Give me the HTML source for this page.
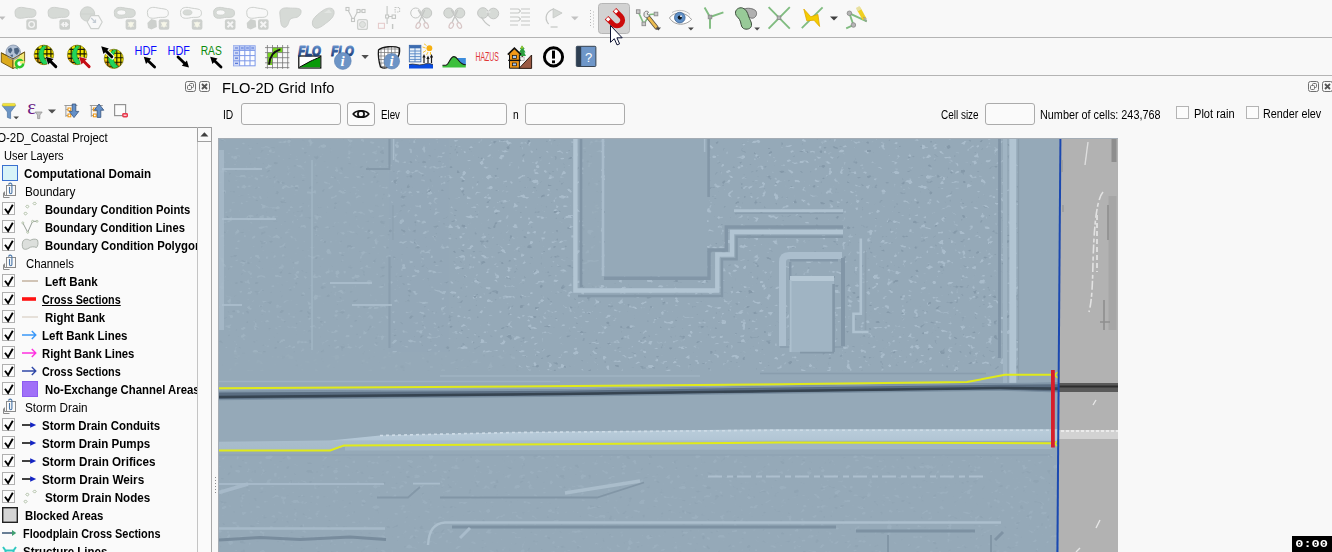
<!DOCTYPE html>
<html><head><meta charset="utf-8"><title>QGIS FLO-2D</title>
<style>
html,body{margin:0;padding:0;}
body{width:1332px;height:552px;overflow:hidden;background:#f8f8f8;position:relative;font-family:"Liberation Sans","DejaVu Sans",sans-serif;font-size:12px;color:#000;}
.abs{position:absolute;}
.hl{position:absolute;left:0;width:1332px;height:1px;background:#b4b4b4;}
.t{position:absolute;white-space:nowrap;line-height:18px;height:18px;font-size:12px;transform-origin:0 50%;}
.b{font-weight:bold;}
.inp{position:absolute;border:1px solid #ababab;border-radius:3px;background:#fafafa;box-sizing:border-box;}
.cb{position:absolute;width:13px;height:13px;border:1px solid #b4b4b4;background:#fcfcfc;box-sizing:border-box;}
#tree{position:absolute;left:0;top:127px;width:198px;height:425px;overflow:hidden;border-top:1px solid #9a9a9a;box-sizing:border-box;background:#fafafa;}
#sb{position:absolute;left:197px;top:127px;width:15px;height:425px;box-sizing:border-box;border-left:1px solid #c4c4c4;border-right:1px solid #a8a8a8;border-top:1px solid #9a9a9a;background:#fafafa;}
#sbb{position:absolute;left:-1px;top:0;width:15px;height:14px;box-sizing:border-box;border-left:1px solid #a0a0a0;border-right:1px solid #a0a0a0;border-bottom:1px solid #a0a0a0;}
#map{position:absolute;left:218px;top:138px;width:900px;height:414px;overflow:hidden;border-top:1px solid #a4acb4;border-left:1px solid #a4acb4;box-sizing:border-box;}
.ck{position:absolute;left:2px;width:13px;height:13px;border:1px solid #b0b0b0;background:#fcfcfc;box-sizing:border-box;}
</style></head><body>
<div class="hl" style="top:37px"></div>
<div class="hl" style="top:75px"></div>
<svg class="abs" style="left:0;top:0" width="1332" height="76" viewBox="0 0 1332 76">
<path d="M-1 16.5 H5.5 L2.2 20 Z" fill="#bdbdbd"/>
<path d="M15.0 12.5 C15.0 8 19.0 7 23.0 7.5 C27.0 8.5 31.0 8.5 34.0 9.5 C36.5 10.5 36.5 15 34.5 16.5 C32.0 18 29.0 17 26.0 17.5 C22.0 18.5 17.0 19 15.5 16 Z" fill="#d6dad6" stroke="#cdd0cd" stroke-width="1"/><rect x="26.3" y="19.2" width="10.6" height="10.6" rx="2" fill="#cdd0cd"/><circle cx="31.6" cy="24.5" r="2.8" fill="none" stroke="#f4f4f4" stroke-width="1.3"/>
<path d="M48.1 12.5 C48.1 8 52.1 7 56.1 7.5 C60.1 8.5 64.1 8.5 67.1 9.5 C69.6 10.5 69.6 15 67.6 16.5 C65.1 18 62.1 17 59.1 17.5 C55.1 18.5 50.1 19 48.6 16 Z" fill="#d6dad6" stroke="#cdd0cd" stroke-width="1"/><rect x="59.400000000000006" y="19.2" width="10.6" height="10.6" rx="2" fill="#cdd0cd"/><path d="M61.2 24.5 L63.7 22.0 V27.0 Z M68.2 24.5 L65.7 22.0 V27.0 Z M63.7 24.5 H65.7" fill="#f4f4f4" stroke="#f4f4f4" stroke-width="1"/>
<circle cx="87.5" cy="14" r="7.2" fill="#d6dad6" stroke="#cdd0cd"/><path d="M80.4 14 H94.7" stroke="#cdd0cd" stroke-width="0.8"/><path d="M87.2 22 L91.0 15.6 H98.5 L102.2 22 L98.5 28.6 H91.0 Z" fill="#f8f8f8" stroke="#cdd0cd" stroke-width="1.1"/><path d="M91.2 18 L95.2 22 M95.5 19.5 V22.3 H92.7" stroke="#c4ccd4" stroke-width="1.2" fill="none"/>
<path d="M114.30000000000001 12.5 C114.30000000000001 8 118.30000000000001 7 122.30000000000001 7.5 C126.30000000000001 8.5 130.3 8.5 133.3 9.5 C135.8 10.5 135.8 15 133.8 16.5 C131.3 18 128.3 17 125.30000000000001 17.5 C121.30000000000001 18.5 116.30000000000001 19 114.80000000000001 16 Z" fill="#d6dad6" stroke="#cdd0cd" stroke-width="1"/><ellipse cx="121.30000000000001" cy="12.5" rx="4.5" ry="2.6" fill="#f8f8f8" stroke="#cdd0cd" stroke-width="0.8"/><rect x="125.60000000000001" y="19.2" width="10.6" height="10.6" rx="2" fill="#cdd0cd"/><path d="M127.5 22.3 H134.3 L130.9 27.9 Z" fill="#f6f6e8"/><path d="M127.5 26.7 H134.3 L130.9 21.1 Z" fill="#f6f6e8" opacity="0.7"/>
<path d="M147.4 12.5 C147.4 8 151.4 7 155.4 7.5 C159.4 8.5 163.4 8.5 166.4 9.5 C168.9 10.5 168.9 15 166.9 16.5 C164.4 18 161.4 17 158.4 17.5 C154.4 18.5 149.4 19 147.9 16 Z" fill="#f8f8f8" stroke="#cdd0cd" stroke-width="1"/><path d="M147.4 23 L151.4 19 L156.4 20.5 L156.9 27 L151.4 29.5 L147.9 28 Z" fill="#cdd0cd"/><rect x="158.70000000000002" y="19.2" width="10.6" height="10.6" rx="2" fill="#cdd0cd"/><path d="M160.6 22.3 H167.4 L164.0 27.9 Z" fill="#f6f6e8"/><path d="M160.6 26.7 H167.4 L164.0 21.1 Z" fill="#f6f6e8" opacity="0.7"/>
<path d="M180.5 12.5 C180.5 8 184.5 7 188.5 7.5 C192.5 8.5 196.5 8.5 199.5 9.5 C202.0 10.5 202.0 15 200.0 16.5 C197.5 18 194.5 17 191.5 17.5 C187.5 18.5 182.5 19 181.0 16 Z" fill="#f8f8f8" stroke="#cdd0cd" stroke-width="1"/><ellipse cx="187.5" cy="12.5" rx="4.5" ry="2.6" fill="#d6dad6" stroke="#cdd0cd" stroke-width="0.8"/><rect x="191.8" y="19.2" width="10.6" height="10.6" rx="2" fill="#cdd0cd"/><path d="M193.7 22.3 H200.5 L197.1 27.9 Z" fill="#f6f6e8"/><path d="M193.7 26.7 H200.5 L197.1 21.1 Z" fill="#f6f6e8" opacity="0.7"/>
<path d="M213.60000000000002 12.5 C213.60000000000002 8 217.60000000000002 7 221.60000000000002 7.5 C225.60000000000002 8.5 229.60000000000002 8.5 232.60000000000002 9.5 C235.10000000000002 10.5 235.10000000000002 15 233.10000000000002 16.5 C230.60000000000002 18 227.60000000000002 17 224.60000000000002 17.5 C220.60000000000002 18.5 215.60000000000002 19 214.10000000000002 16 Z" fill="#d6dad6" stroke="#cdd0cd" stroke-width="1"/><ellipse cx="220.60000000000002" cy="12.5" rx="4.5" ry="2.6" fill="#f8f8f8" stroke="#cdd0cd" stroke-width="0.8"/><rect x="224.90000000000003" y="19.2" width="10.6" height="10.6" rx="2" fill="#cdd0cd"/><path d="M227.50000000000003 21.8 L232.9 27.2 M232.9 21.8 L227.50000000000003 27.2" stroke="#f4f4f4" stroke-width="2"/>
<path d="M246.70000000000002 12.5 C246.70000000000002 8 250.70000000000002 7 254.70000000000002 7.5 C258.70000000000005 8.5 262.70000000000005 8.5 265.70000000000005 9.5 C268.20000000000005 10.5 268.20000000000005 15 266.20000000000005 16.5 C263.70000000000005 18 260.70000000000005 17 257.70000000000005 17.5 C253.70000000000002 18.5 248.70000000000002 19 247.20000000000002 16 Z" fill="#f8f8f8" stroke="#cdd0cd" stroke-width="1"/><path d="M246.70000000000002 23 L250.70000000000002 19 L255.70000000000002 20.5 L256.20000000000005 27 L250.70000000000002 29.5 L247.20000000000002 28 Z" fill="#cdd0cd"/><rect x="258.0" y="19.2" width="10.6" height="10.6" rx="2" fill="#cdd0cd"/><path d="M260.6 21.8 L266.0 27.2 M266.0 21.8 L260.6 27.2" stroke="#f4f4f4" stroke-width="2"/>
<path d="M279.8 13 C279.8 8.5 283.8 7.5 288.8 8 C293.8 8.5 298.8 7.5 300.8 10 C301.8 13 299.8 17 295.8 17.5 C291.8 18 289.8 18.5 288.8 22 C287.8 26 285.8 28 283.3 27 C280.8 26 280.8 22 280.3 18 Z" fill="#d6dad6" stroke="#cdd0cd"/>
<path d="M312.40000000000003 22 C312.90000000000003 18 317.90000000000003 14 322.90000000000003 10.5 C326.90000000000003 7.5 332.90000000000003 7 333.90000000000003 11 C334.90000000000003 15 331.90000000000003 19 326.90000000000003 22.5 C322.90000000000003 25.5 318.90000000000003 29 315.40000000000003 28 C312.90000000000003 27 312.20000000000005 25 312.40000000000003 22 Z" fill="#d6dad6" stroke="#cdd0cd"/><path d="M323.90000000000003 13 L328.90000000000003 9.5 L331.90000000000003 13 Z" fill="#e2e5e2"/>
<g fill="none" stroke="#c4c6c4" stroke-width="1.1"><path d="M347.5 9 L353.0 20 L358.0 11 H363.0"/><rect x="346.0" y="7.5" width="3" height="3" fill="#f8f8f8"/><rect x="351.5" y="18.5" width="3" height="3" fill="#f8f8f8"/><rect x="357.0" y="9.5" width="3" height="3" fill="#f8f8f8"/><rect x="362.0" y="9.5" width="3" height="3" fill="#f8f8f8"/></g><rect x="357.6" y="19.6" width="9.8" height="9.8" rx="2" fill="#f2f2f2" stroke="#cdd0cd" stroke-width="1.3"/><circle cx="362.5" cy="24.5" r="3" fill="#dfe2df" stroke="#cdd0cd" stroke-width="1"/>
<g fill="none" stroke="#c4c6c4" stroke-width="1.1"><path d="M387.1 6 V24 M387.1 16.5 H393.6"/><rect x="385.6" y="15" width="3" height="3" fill="#f8f8f8"/><rect x="392.1" y="15" width="3.4" height="3.4" fill="#f8f8f8"/><rect x="395.1" y="7.5" width="4.5" height="4.5" stroke-dasharray="1.5 1"/></g><rect x="378.40000000000003" y="23.3" width="6" height="5" fill="none" stroke="#e4c8c8" stroke-width="1"/><path d="M392.6 24 V29" stroke="#c4c6c4" stroke-width="1.4"/>
<circle cx="415.70000000000005" cy="13" r="5" fill="#f8f8f8" stroke="#c4c6c4"/><circle cx="426.70000000000005" cy="13" r="5" fill="#d6dad6" stroke="#c4c6c4"/><path d="M418.20000000000005 10 L425.70000000000005 23 M424.70000000000005 10 L418.70000000000005 23" stroke="#c4c6c4" stroke-width="1.4"/><ellipse cx="418.20000000000005" cy="25.5" rx="2" ry="3" transform="rotate(25 418.20000000000005 25.5)" fill="none" stroke="#d8c6c6" stroke-width="1.2"/><ellipse cx="426.20000000000005" cy="25.5" rx="2" ry="3" transform="rotate(-25 426.20000000000005 25.5)" fill="none" stroke="#d8c6c6" stroke-width="1.2"/>
<circle cx="448.8" cy="13" r="5" fill="#d6dad6" stroke="#c4c6c4"/><circle cx="459.8" cy="13" r="5" fill="#d6dad6" stroke="#c4c6c4"/><path d="M451.3 10 L458.8 23 M457.8 10 L451.8 23" stroke="#c4c6c4" stroke-width="1.4"/><ellipse cx="451.3" cy="25.5" rx="2" ry="3" transform="rotate(25 451.3 25.5)" fill="none" stroke="#d8c6c6" stroke-width="1.2"/><ellipse cx="459.3" cy="25.5" rx="2" ry="3" transform="rotate(-25 459.3 25.5)" fill="none" stroke="#d8c6c6" stroke-width="1.2"/>
<circle cx="482.90000000000003" cy="13" r="5.3" fill="#d6dad6" stroke="#c4c6c4"/><circle cx="493.40000000000003" cy="13.5" r="5.3" fill="#d6dad6" stroke="#c4c6c4"/><path d="M481.40000000000003 17 C483.40000000000003 21 486.40000000000003 24 489.90000000000003 26" stroke="#c4c6c4" stroke-width="1.2" fill="none"/><path d="M486.40000000000003 12 H490.40000000000003" stroke="#eee" stroke-width="1"/>
<path d="M510.0 9 H518.0 M521.0 9 H530.0 M510.0 13 H518.0 M521.0 13 H530.0 M510.0 17 H518.0 M521.0 17 H530.0 M510.0 21 H518.0 M521.0 21 H530.0 M510.0 25 H518.0 M521.0 25 H530.0 M518.0 9 C520.0 9 519.0 11 521.0 11 M518.0 13 C520.0 13 519.0 11 521.0 11 M518.0 17 C520.0 17 519.0 19 521.0 19 M518.0 21 C520.0 21 519.0 19 521.0 19" fill="none" stroke="#c4c6c4" stroke-width="1.1"/>
<path d="M553.6 9 C546.6 11 543.6 18 548.6 24" fill="none" stroke="#c4c6c4" stroke-width="1.2"/><path d="M550.6 27 H557.6" stroke="#c4c6c4" stroke-width="1.2"/><path d="M553.1 8.5 L562.1 13 L553.1 18 Z" fill="#d6dad6" stroke="#c4c6c4" stroke-width="0.8"/>
<path d="M571 16.5 H578.6 L574.8 20.3 Z" fill="#c2c2c2"/>
<rect x="590" y="10" width="1" height="1" fill="#b8b8b8"/><rect x="593" y="11.5" width="1" height="1" fill="#b8b8b8"/>
<rect x="590" y="13" width="1" height="1" fill="#b8b8b8"/><rect x="593" y="14.5" width="1" height="1" fill="#b8b8b8"/>
<rect x="590" y="16" width="1" height="1" fill="#b8b8b8"/><rect x="593" y="17.5" width="1" height="1" fill="#b8b8b8"/>
<rect x="590" y="19" width="1" height="1" fill="#b8b8b8"/><rect x="593" y="20.5" width="1" height="1" fill="#b8b8b8"/>
<rect x="590" y="22" width="1" height="1" fill="#b8b8b8"/><rect x="593" y="23.5" width="1" height="1" fill="#b8b8b8"/>
<rect x="590" y="25" width="1" height="1" fill="#b8b8b8"/><rect x="593" y="26.5" width="1" height="1" fill="#b8b8b8"/>
<rect x="598.5" y="3.5" width="31" height="30" rx="3" fill="#d2d2d2" stroke="#b6b6b6"/>
<g transform="translate(617 20.2) rotate(-45)"><path d="M-5.6 -9.2 V0 A5.6 5.6 0 0 0 5.6 0 V-9.2" fill="none" stroke="#cc0a0a" stroke-width="5"/><path d="M-5.6 -8.6 V-5.4 M5.6 -8.6 V-5.4" stroke="#fff" stroke-width="3.2"/></g>
<g fill="none" stroke="#80bc80" stroke-width="1.6"><path d="M638.2 11.6 L643.8 23.9 L650 14.5 L656 14"/></g>
<rect x="636.4000000000001" y="9.799999999999999" width="3.6" height="3.6" fill="#c8c8c8" stroke="#8c8c8c" stroke-width="0.9"/>
<rect x="642.0" y="22.099999999999998" width="3.6" height="3.6" fill="#c8c8c8" stroke="#8c8c8c" stroke-width="0.9"/>
<rect x="654.2" y="12.2" width="3.6" height="3.6" fill="#c8c8c8" stroke="#8c8c8c" stroke-width="0.9"/>
<path d="M648.5 17.5 L656.5 27.5" stroke="#5a5040" stroke-width="4.4" stroke-linecap="round"/><path d="M648.8 17.9 L656.2 27.1" stroke="#ecbc50" stroke-width="2.6" stroke-linecap="round"/>
<path d="M644 14 C644 11 647 10.5 648.5 12 L647 14 L649.5 15.5 C648.5 18 645 18 644 16 Z" fill="#e8e8e8" stroke="#707070" stroke-width="0.9"/>
<path d="M655.8 27.6 H661 L658.4 30.4 Z" fill="#484848"/>
<path d="M669.5 18 C673 12 685 10.5 691.5 19.5 C686 25.5 675 26.5 669.5 18 Z" fill="#fff" stroke="#909090" stroke-width="0.9"/><path d="M672 12.5 C678 9 686 10 690 14.5" fill="none" stroke="#b0b0b0" stroke-width="0.8"/><circle cx="679.8" cy="17.6" r="5.3" fill="#5f8fc6" stroke="#3c6494" stroke-width="0.8"/><circle cx="679.8" cy="17.6" r="2.1" fill="#101820"/><circle cx="681" cy="16.2" r="0.9" fill="#fff"/>
<path d="M688 27.6 H693.8 L690.9 30.5 Z" fill="#484848"/>
<path d="M710 17 L704.6 7.5 M710 17 L723.4 12.3 M710 17 V28.7" stroke="#80bc80" stroke-width="1.9" fill="none"/><rect x="708.2" y="15.2" width="3.6" height="3.6" fill="#a8a8a8" stroke="#8a8a8a" stroke-width="0.8"/>
<path d="M744 9 C748 7.5 753 8.5 755.5 10.5 C757.5 13 756.5 16 754.5 17.5 C752.5 19 749 18 747.5 16 Z" fill="#b0b0b0" stroke="#666" stroke-width="0.9"/>
<path d="M735.5 13.5 C735 9.5 739 7 742.5 8 C746 9 747.5 12.5 748.5 16 C749.5 19.5 752 22 751.5 25.5 C751 29 746.5 30 743.5 28.5 C740.5 27 741.5 22.5 739.5 19.5 C738 17 736 16.5 735.5 13.5 Z" fill="#98ca98" stroke="#3c4c3c" stroke-width="1"/>
<path d="M754.3 27.6 H760 L757.1 30.5 Z" fill="#484848"/>
<path d="M768.6 7.2 L789.8 28.6 M789.8 7.2 L768.6 28.6" stroke="#80bc80" stroke-width="1.9"/><rect x="777.2" y="16" width="3.6" height="3.6" fill="#b4b4b4" stroke="#8a8a8a" stroke-width="0.8"/>
<path d="M801.8 28.2 L822.6 7.4" stroke="#80bc80" stroke-width="1.9"/>
<path d="M803.8 9 L810.8 16.8 L817.9 14.4 L819.6 26.5 L814 20.2 L806.8 20.8 Z" fill="#f4cc00" stroke="#e0a800" stroke-width="0.8" stroke-linejoin="round"/>
<path d="M830 16.4 H838 L834 20.4 Z" fill="#404040"/>
<path d="M846.2 28.4 L853.4 25 L849.4 13.3 L866.8 21.4" fill="none" stroke="#80bc80" stroke-width="1.9"/><circle cx="849.4" cy="13.3" r="2.3" fill="#b4b4b4" stroke="#888" stroke-width="0.8"/><circle cx="853.4" cy="25" r="2.3" fill="#b4b4b4" stroke="#888" stroke-width="0.8"/>
<path d="M858.6 8.6 L864.4 19" stroke="#f0d020" stroke-width="4.2"/><path d="M863.4 17.2 L866.2 18.4 L866 21.6 Z" fill="#c8c0b0" stroke="#888" stroke-width="0.5"/><path d="M857.6 7 L859.6 10.4" stroke="#e8e0a0" stroke-width="4.2"/>
<path d="M610.5 25.5 V42.3 L614.3 38.7 L617 44.9 L619.6 43.8 L616.9 37.8 H622.2 Z" fill="#fff" stroke="#0a1030" stroke-width="1" stroke-linejoin="miter"/>
<path d="M1.3 52.8 L13 58.8 V68.6 L1.3 62.2 Z" fill="#dcaa1c" stroke="#6a5010" stroke-width="0.9"/>
<path d="M13 58.8 L24.6 52 V62.4 L13 68.6 Z" fill="#f4ea78" stroke="#6a5010" stroke-width="0.9"/>
<circle cx="13.2" cy="52.2" r="7.2" fill="#b4c2d6" stroke="#7888a0" stroke-width="0.7"/>
<path d="M8 49 L11 47.5 L12.5 50 L10.5 53.5 L8.5 52 Z M14 48.5 L18 47.5 L19.5 51 L17 55 L14.5 53 Z M10 55 L13 54.5 L12.5 57.5 Z" fill="#4c6482"/>
<path d="M1.3 52.8 L13 58.8 L24.6 52" fill="none" stroke="#6a5010" stroke-width="0.9"/>
<circle cx="19.6" cy="63.6" r="3.6" fill="#fff" stroke="#2cc42c" stroke-width="2.6"/><path d="M20 61 H24.5 V63.5 H20 Z" fill="#f4ea78"/><path d="M17.5 66.8 L14.8 68 L17.8 69.4 Z" fill="#2cc42c"/>
<clipPath id="gc1"><circle cx="43.9" cy="54.9" r="9.8"/></clipPath><circle cx="43.9" cy="54.9" r="9.8" fill="#f2e400"/><g clip-path="url(#gc1)"><path d="M34.099999999999994 55.9 L41.9 57.9 L42.9 64.7 L34.099999999999994 64.7 Z" fill="#f0a010"/><rect x="44.9" y="58.4" width="4.5" height="4" fill="#f0a010"/><path d="M34.099999999999994 49.4 H53.7 M34.099999999999994 53.9 H53.7 M34.099999999999994 58.4 H53.7 M34.099999999999994 62.4 H53.7 M37.9 45.099999999999994 V64.7 M42.4 45.099999999999994 V64.7 M46.9 45.099999999999994 V64.7 M50.9 45.099999999999994 V64.7 " stroke="#181800" stroke-width="1.1" fill="none"/><path d="M47.9 44.099999999999994 C37.9 46.099999999999994 34.9 58.9 44.9 65.2 L48.4 62.7 C42.4 58.9 41.4 50.9 47.9 44.099999999999994 Z" fill="#22d45a" stroke="#0a9030" stroke-width="0.6"/></g><circle cx="43.9" cy="54.9" r="9.8" fill="none" stroke="#6a6400" stroke-width="0.6"/>
<path d="M50.3 61.2 L55.8 66.6" stroke="#fff" stroke-width="4.6" stroke-linecap="round"/><polygon points="45.3,56.3 47.7,65.3 54.3,58.5" fill="#fff"/>
<path d="M50.1 61.0 L55.8 66.6" stroke="#000" stroke-width="3" stroke-linecap="round"/><polygon points="45.8,56.8 48.1,64.4 53.5,59.0" fill="#000"/>
<clipPath id="gc2"><circle cx="77.2" cy="54.9" r="9.8"/></clipPath><circle cx="77.2" cy="54.9" r="9.8" fill="#f2e400"/><g clip-path="url(#gc2)"><path d="M67.4 55.9 L75.2 57.9 L76.2 64.7 L67.4 64.7 Z" fill="#f0a010"/><rect x="78.2" y="58.4" width="4.5" height="4" fill="#f0a010"/><path d="M67.4 49.4 H87.0 M67.4 53.9 H87.0 M67.4 58.4 H87.0 M67.4 62.4 H87.0 M71.2 45.099999999999994 V64.7 M75.7 45.099999999999994 V64.7 M80.2 45.099999999999994 V64.7 M84.2 45.099999999999994 V64.7 " stroke="#181800" stroke-width="1.1" fill="none"/><path d="M81.2 44.099999999999994 C71.2 46.099999999999994 68.2 58.9 78.2 65.2 L81.7 62.7 C75.7 58.9 74.7 50.9 81.2 44.099999999999994 Z" fill="#22d45a" stroke="#0a9030" stroke-width="0.6"/></g><circle cx="77.2" cy="54.9" r="9.8" fill="none" stroke="#6a6400" stroke-width="0.6"/>
<path d="M83.6 61.2 L89.1 66.6" stroke="#fff" stroke-width="4.6" stroke-linecap="round"/><polygon points="78.6,56.3 81.0,65.3 87.6,58.5" fill="#fff"/>
<path d="M83.4 61.0 L89.1 66.6" stroke="#c40c14" stroke-width="3" stroke-linecap="round"/><polygon points="79.1,56.8 81.4,64.4 86.8,59.0" fill="#c40c14"/>
<clipPath id="gc3"><circle cx="113.8" cy="58.8" r="9.6"/></clipPath><circle cx="113.8" cy="58.8" r="9.6" fill="#f2e400"/><g clip-path="url(#gc3)"><path d="M104.2 59.8 L111.8 61.8 L112.8 68.39999999999999 L104.2 68.39999999999999 Z" fill="#f0a010"/><rect x="114.8" y="62.3" width="4.5" height="4" fill="#f0a010"/><path d="M104.2 53.3 H123.39999999999999 M104.2 57.8 H123.39999999999999 M104.2 62.3 H123.39999999999999 M104.2 66.3 H123.39999999999999 M107.8 49.199999999999996 V68.39999999999999 M112.3 49.199999999999996 V68.39999999999999 M116.8 49.199999999999996 V68.39999999999999 M120.8 49.199999999999996 V68.39999999999999 " stroke="#181800" stroke-width="1.1" fill="none"/><path d="M117.8 48.199999999999996 C107.8 50.199999999999996 104.8 62.8 114.8 68.89999999999999 L118.3 66.39999999999999 C112.3 62.8 111.3 54.8 117.8 48.199999999999996 Z" fill="#22d45a" stroke="#0a9030" stroke-width="0.6"/></g><circle cx="113.8" cy="58.8" r="9.6" fill="none" stroke="#6a6400" stroke-width="0.6"/>
<path d="M105.6 50.7 L112.3 57.2" stroke="#fff" stroke-width="4.6" stroke-linecap="round"/><polygon points="100.6,45.8 103.0,54.8 109.6,48.0" fill="#fff"/>
<path d="M105.5 50.5 L111.8 56.8" stroke="#000" stroke-width="3" stroke-linecap="round"/><polygon points="101.2,46.3 103.5,53.9 108.8,48.5" fill="#000"/>
<text x="134.6" y="54.9" font-family="Liberation Sans, sans-serif" font-size="12.3" fill="#0a0aff" textLength="22.4" lengthAdjust="spacingAndGlyphs">HDF</text>
<path d="M147.8 60.5 L154.6 67.0" stroke="#000" stroke-width="2.8" stroke-linecap="round"/><polygon points="143.8,56.7 146.0,63.9 151.1,58.5" fill="#000"/>
<text x="167.6" y="54.9" font-family="Liberation Sans, sans-serif" font-size="12.3" fill="#0a0aff" textLength="22.4" lengthAdjust="spacingAndGlyphs">HDF</text>
<path d="M185.0 63.8 L178.0 57.0" stroke="#000" stroke-width="2.8" stroke-linecap="round"/><polygon points="189.0,67.6 186.9,60.4 181.8,65.8" fill="#000"/>
<text x="200.7" y="54.9" font-family="Liberation Sans, sans-serif" font-size="12.3" fill="#0a8a0a" textLength="21.1" lengthAdjust="spacingAndGlyphs">RAS</text>
<path d="M214.2 60.5 L221.0 67.0" stroke="#000" stroke-width="2.8" stroke-linecap="round"/><polygon points="210.2,56.7 212.4,63.9 217.5,58.5" fill="#000"/>
<rect x="233.5" y="45.8" width="21.6" height="20" fill="#fdfdff" stroke="#7c98e8"/>
<rect x="233.5" y="45.8" width="21.6" height="4.4" fill="#b8c8f4"/><rect x="233.5" y="45.8" width="6" height="20" fill="#c4d0f4" opacity="0.8"/>
<path d="M233.5 50.4 H255 M233.5 55.6 H255 M233.5 60.8 H255 M239.6 45.8 V65.8 M244.8 45.8 V65.8 M250 45.8 V65.8" stroke="#7c98e8" stroke-width="1"/>
<path d="M235 48 H238 M241 48 H243.6 M246.2 48 H248.8 M251.4 48 H254 M235 53 H238 M235 58.2 H238 M235 63.4 H238" stroke="#5878d8" stroke-width="1.2"/>
<path d="M272.5 47.6 H282.6 V52.6 H277.5 V57.7 H272.5 V65 H267.4 V52.6 H272.5 Z" fill="#76d61e"/><path d="M267.4 45 V68.8 M272.5 45 V68.8 M277.5 45 V68.8 M282.6 45 V68.8 M287.7 45 V68.8 M265 47.6 H289.4 M265 52.6 H289.4 M265 57.7 H289.4 M265 62.8 H289.4 M265 67.6 H289.4 " stroke="#707070" stroke-width="0.9" fill="none" opacity="0.85"/><path d="M269 64.6 C269.6 57 273 51.5 280.4 49.4" fill="none" stroke="#101010" stroke-width="1.8"/>
<defs><linearGradient id="flg" x1="0" y1="0" x2="0" y2="1"><stop offset="0" stop-color="#86b0e2"/><stop offset="0.45" stop-color="#3a64a6"/><stop offset="1" stop-color="#102a5c"/></linearGradient></defs>
<rect x="298.8" y="56" width="22" height="12" fill="#fff" stroke="#000" stroke-width="1.2"/><path d="M299.5 67.2 L310 61.5 C313 60 316 58.8 320.2 57 V67.2 Z" fill="#0a9a0a"/><path d="M299.5 67.2 L310 61.5 C313 60 316 58.8 320.2 57" fill="none" stroke="#000" stroke-width="1"/>
<text x="298.3" y="56" font-family="Liberation Sans, sans-serif" font-weight="bold" font-style="italic" font-size="14" fill="url(#flg)" stroke="url(#flg)" stroke-width="1.1" stroke-linejoin="round" textLength="22.4" lengthAdjust="spacingAndGlyphs">FLO</text>
<text x="331.3" y="56" font-family="Liberation Sans, sans-serif" font-weight="bold" font-style="italic" font-size="14" fill="url(#flg)" stroke="url(#flg)" stroke-width="1.1" stroke-linejoin="round" textLength="22.4" lengthAdjust="spacingAndGlyphs">FLO</text>
<circle cx="342.8" cy="61" r="8.4" fill="#6c94c6" stroke="#5a80b0" stroke-width="0.6"/><text x="342.5" y="66" text-anchor="middle" font-family="Liberation Serif, serif" font-style="italic" font-weight="bold" font-size="15" fill="#fff">i</text>
<path d="M361.4 55 H368.8 L365.1 58.9 Z" fill="#505050"/>
<clipPath id="gb"><path d="M378.5 50 C382 46.5 394 45.5 399.5 48 C400 52 399 56 397 58 L392 66 C388 68 383 68.5 380.5 67 C379 62 378 55 378.5 50 Z"/></clipPath>
<g clip-path="url(#gb)"><rect x="377" y="45" width="24" height="24" fill="#fdfdfd"/><path d="M381 45 V69 M384.5 45 V69 M388 45 V69 M391.5 45 V69 M395 45 V69 M398.5 45 V69 M377 49 H401 M377 52.5 H401 M377 56 H401 M377 59.5 H401 M377 63 H401 M377 66.5 H401 " stroke="#808080" stroke-width="0.8"/></g>
<path d="M378.5 50 C382 46.5 394 45.5 399.5 48 C400 52 399 56 397 58 L392 66 C388 68 383 68.5 380.5 67 C379 62 378 55 378.5 50 Z" fill="none" stroke="#181818" stroke-width="1.3"/>
<circle cx="391.8" cy="61.2" r="7.8" fill="#6c94c6" stroke="#5a80b0" stroke-width="0.6"/><text x="391.5" y="66.2" text-anchor="middle" font-family="Liberation Serif, serif" font-style="italic" font-weight="bold" font-size="15" fill="#fff">i</text>
<rect x="409.3" y="45.3" width="11.6" height="16.6" fill="#eaf2fa" stroke="#2c5a9c" stroke-width="0.8"/><rect x="409.3" y="45.3" width="11.6" height="3" fill="#3c6cb0"/>
<path d="M409.3 51 H421 M409.3 53.8 H421 M409.3 56.6 H421 M409.3 59.4 H421 M415 48 V62" stroke="#5484c4" stroke-width="0.9"/>
<circle cx="429.4" cy="48.2" r="2.9" fill="#f6b010"/><path d="M425.6 48 L422.5 47 M426 50.5 L423 52.5 M428 52 L426.5 55 M430.5 52 V54.8 M426.5 45.5 L424 43.8" stroke="#f6c020" stroke-width="0.9"/>
<path d="M424 63 V56 M428 63 V57.5 M431.5 63 V56" stroke="#181818" stroke-width="1.2"/><path d="M422.4 57.5 L424 54 L425.6 57.5 Z M426.4 59 L428 55.5 L429.6 59 Z M429.9 57.5 L431.5 54 L433.1 57.5 Z" fill="#181818"/>
<path d="M409 64.5 C414 63 418 66 423 64.5 C427 63 430 63.5 433 64.5 V68.6 H409 Z" fill="#0a4ce0"/><path d="M409 64.5 C414 63 418 66 423 64.5 C427 63 430 63.5 433 64.5" fill="none" stroke="#303030" stroke-width="0.8"/>
<path d="M456 58 H465.8 V65 H459.5 Z" fill="#3c8cdc"/>
<path d="M442.5 67.6 V65.2 H446 C449 65 450 56.6 454 56.6 C458 56.6 458.5 64.6 465.8 64.8 V67.6 Z" fill="#3cc03c"/><path d="M442.5 65.2 H446 C449 65 450 56.6 454 56.6 C458 56.6 458.5 64.6 465.8 64.8" fill="none" stroke="#181818" stroke-width="1.1"/>
<text x="475.5" y="61" font-family="Liberation Sans, sans-serif" font-size="12.6" fill="#e03434" textLength="23.3" lengthAdjust="spacingAndGlyphs">HAZUS</text>
<path d="M519 68.4 L531.6 55 V68.4 Z" fill="#9a5a44" stroke="#201008" stroke-width="0.9"/>
<path d="M522 45.5 L519.8 49 L521 49 L519 52.5 L520.5 52.5 L518.6 56 H526 L524.2 52.5 L525.6 52.5 L523.6 49 L524.8 49 Z" fill="#2ca040"/><path d="M522 45.5 L520.5 48.5 L523.6 48.5 Z" fill="#a8c828"/><rect x="521.6" y="56" width="1.4" height="3" fill="#402010"/>
<rect x="520.5" y="57" width="3.6" height="3.6" fill="#f0f0f0" stroke="#888" stroke-width="0.5"/>
<path d="M509.5 53.6 H519.4 V68.2 H509.5 Z" fill="#f49a18" stroke="#101010" stroke-width="1"/>
<path d="M507.8 54.6 L514.4 48.2 L521 54.6" fill="#f49a18" stroke="#101010" stroke-width="1.6" stroke-linejoin="miter"/>
<path d="M508.2 60.4 H520.6" stroke="#101010" stroke-width="1.4"/>
<rect x="512.6" y="55.6" width="3.8" height="2.8" fill="#a8c8f0" stroke="#101010" stroke-width="0.7"/><rect x="512.6" y="63" width="3.8" height="2.8" fill="#a8c8f0" stroke="#101010" stroke-width="0.7"/>
<circle cx="553.5" cy="56.9" r="9.1" fill="#fafafa" stroke="#000" stroke-width="2.9"/><path d="M553.5 50.6 V58.6" stroke="#000" stroke-width="3"/><rect x="552" y="60.4" width="3" height="2.8" fill="#000"/>
<rect x="576.3" y="46.3" width="19.6" height="20.2" rx="1" fill="#6e96c8" stroke="#2a3440" stroke-width="0.9"/><rect x="576.6" y="46.6" width="4.6" height="19.6" fill="#2e3f52"/>
<text x="588.6" y="61.8" text-anchor="middle" font-family="Liberation Sans, sans-serif" font-size="13" fill="#fff">?</text>
</svg>
<svg class="abs" style="left:0;top:100px" width="135" height="24" viewBox="0 100 135 24">
<path d="M2.2 105.6 H15.6 L10.6 112 V118.6 L7.4 117.4 V112 Z" fill="#6c94c4" stroke="#4c74a4" stroke-width="0.7"/><rect x="2.4" y="103.4" width="13" height="2.6" rx="1" fill="#f2e23c" stroke="#c8b820" stroke-width="0.5"/>
<path d="M13.4 116.4 H19 L16.2 119.2 Z" fill="#484848"/>
<text x="27.2" y="113.6" font-family="Liberation Serif, DejaVu Serif, serif" font-size="21" fill="#6c1c84">ε</text>
<path d="M35.2 112 H42.2 L39.8 115 V118.6 H37.6 V115 Z" fill="#c4c4c4" stroke="#8c8c8c" stroke-width="0.7"/>
<path d="M47.9 109.4 H56 L52 113.6 Z" fill="#505050"/>
<path d="M64.4 105.5 H77.4 M65.9 105.5 V116.8 M65.9 109.6 H68.4 M65.9 115.6 H68.4" fill="none" stroke="#9a9a9a" stroke-width="1"/><rect x="68.0" y="108" width="2.8" height="2.8" fill="#fff" stroke="#f09408" stroke-width="1"/><rect x="68.0" y="114" width="2.8" height="2.8" fill="#fff" stroke="#f09408" stroke-width="1"/>
<path d="M72.2 104 H75.8 V111.4 H78.8 L74 117.6 L69.2 111.4 H72.2 Z" fill="#6490c8" stroke="#34507c" stroke-width="0.8"/>
<path d="M89.8 105.5 H102.8 M91.3 105.5 V116.8 M91.3 109.6 H93.8 M91.3 115.6 H93.8" fill="none" stroke="#9a9a9a" stroke-width="1"/><rect x="93.39999999999999" y="108" width="2.8" height="2.8" fill="#fff" stroke="#f09408" stroke-width="1"/><rect x="93.39999999999999" y="114" width="2.8" height="2.8" fill="#fff" stroke="#f09408" stroke-width="1"/>
<path d="M97.2 117.4 H100.8 V110.2 H103.8 L99 104 L94.2 110.2 H97.2 Z" fill="#6490c8" stroke="#34507c" stroke-width="0.8"/>
<rect x="114.6" y="104.6" width="11" height="11" fill="#fcfcfc" stroke="#949494" stroke-width="1.2"/><rect x="122.2" y="112.9" width="5.8" height="4.6" rx="1.4" fill="#e8384c"/><path d="M123.6 115.2 H126.6" stroke="#fff" stroke-width="1.1"/>
</svg>

<div class="t" style="left:221.99px;top:79px;font-size:15px;transform:scaleX(0.9772);">FLO-2D Grid Info</div>
<div class="t" style="left:223.40px;top:106px;transform:scaleX(0.8583);">ID</div>
<div class="t" style="left:380.80px;top:106px;transform:scaleX(0.8139);">Elev</div>
<div class="t" style="left:512.80px;top:106px;transform:scaleX(0.8541);">n</div>
<div class="t" style="left:941.10px;top:106px;transform:scaleX(0.8293);">Cell size</div>
<div class="t" style="left:1040.09px;top:106px;transform:scaleX(0.9034);">Number of cells: 243,768</div>
<div class="t" style="left:1193.57px;top:105px;transform:scaleX(0.9233);">Plot rain</div>
<div class="t" style="left:1262.90px;top:105px;transform:scaleX(0.8999);">Render elev</div>
<div class="inp" style="left:241px;top:103px;width:100px;height:22px;"></div>
<div class="inp" style="left:347px;top:102px;width:28px;height:24px;background:#fbfbfb;"></div>
<svg class="abs" style="left:352px;top:107px" width="18" height="14" viewBox="0 0 18 14"><path d="M1.2 7 C4 2.6 14 2.6 16.8 7 C14 11.4 4 11.4 1.2 7 Z" fill="none" stroke="#111" stroke-width="1.6"/><circle cx="9" cy="7" r="3.1" fill="none" stroke="#111" stroke-width="1.7"/></svg>
<div class="inp" style="left:407px;top:103px;width:100px;height:22px;"></div>
<div class="inp" style="left:525px;top:103px;width:100px;height:22px;"></div>
<div class="inp" style="left:985px;top:103px;width:50px;height:22px;"></div>
<div class="cb" style="left:1176px;top:106px;"></div>
<div class="cb" style="left:1246px;top:106px;"></div>

<!-- dock buttons -->
<svg class="abs" style="left:184px;top:80px" width="28" height="13" viewBox="184 80 28 13">
<g fill="none" stroke="#707070"><rect x="185.5" y="81.5" width="10" height="10" rx="2"/><rect x="199.5" y="81.5" width="10" height="10" rx="2"/>
<rect x="189.5" y="83.5" width="4" height="4" rx="1"/><rect x="187.5" y="85.5" width="4" height="4" rx="1" fill="#f8f8f8"/></g>
<path d="M202 84 L207 89 M207 84 L202 89" stroke="#555" stroke-width="1.8"/></svg>
<svg class="abs" style="left:1307px;top:80px" width="25" height="13" viewBox="184 80 25 13">
<g fill="none" stroke="#707070"><rect x="185.5" y="81.5" width="10" height="10" rx="2"/><rect x="199.5" y="81.5" width="10" height="10" rx="2"/>
<rect x="189.5" y="83.5" width="4" height="4" rx="1"/><rect x="187.5" y="85.5" width="4" height="4" rx="1" fill="#f8f8f8"/></g>
<path d="M202 84 L207 89 M207 84 L202 89" stroke="#555" stroke-width="1.8"/></svg>

<div id="tree">
<div class="t" style="left:-15.93px;top:1px;font-size:13px;transform:scaleX(0.8723);">FLO-2D_Coastal Project</div>
<div class="t" style="left:3.77px;top:19px;transform:scaleX(0.9216);">User Layers</div>
<div class="t b" style="left:23.70px;top:37px;transform:scaleX(0.9678);">Computational Domain</div>
<div class="t" style="left:24.77px;top:55px;transform:scaleX(0.9816);">Boundary</div>
<div class="t b" style="left:44.80px;top:73px;transform:scaleX(0.9355);">Boundary Condition Points</div>
<div class="t b" style="left:44.80px;top:91px;transform:scaleX(0.9327);">Boundary Condition Lines</div>
<div class="t b" style="left:44.60px;top:109px;transform:scaleX(0.9450);">Boundary Condition Polygons</div>
<div class="t" style="left:25.79px;top:127px;transform:scaleX(0.9427);">Channels</div>
<div class="t b" style="left:44.80px;top:145px;transform:scaleX(0.9622);">Left Bank</div>
<div class="t b" style="left:42.00px;top:163px;transform:scaleX(0.9008);text-decoration:underline;">Cross Sections</div>
<div class="t b" style="left:44.80px;top:181px;transform:scaleX(0.9506);">Right Bank</div>
<div class="t b" style="left:42.20px;top:199px;transform:scaleX(0.9559);">Left Bank Lines</div>
<div class="t b" style="left:42.20px;top:217px;transform:scaleX(0.9428);">Right Bank Lines</div>
<div class="t b" style="left:42.00px;top:235px;transform:scaleX(0.9008);">Cross Sections</div>
<div class="t b" style="left:44.60px;top:253px;transform:scaleX(0.9450);">No-Exchange Channel Areas</div>
<div class="t" style="left:24.76px;top:271px;transform:scaleX(0.9786);">Storm Drain</div>
<div class="t b" style="left:42.20px;top:289px;transform:scaleX(0.9532);">Storm Drain Conduits</div>
<div class="t b" style="left:42.20px;top:307px;transform:scaleX(0.9659);">Storm Drain Pumps</div>
<div class="t b" style="left:42.20px;top:325px;transform:scaleX(0.9726);">Storm Drain Orifices</div>
<div class="t b" style="left:42.20px;top:343px;transform:scaleX(0.9783);">Storm Drain Weirs</div>
<div class="t b" style="left:44.80px;top:361px;transform:scaleX(0.9680);">Storm Drain Nodes</div>
<div class="t b" style="left:24.50px;top:379px;transform:scaleX(0.9452);">Blocked Areas</div>
<div class="t b" style="left:22.50px;top:397px;transform:scaleX(0.9085);">Floodplain Cross Sections</div>
<div class="t b" style="left:22.50px;top:415px;transform:scaleX(0.9577);">Structure Lines</div>
<div class="ck" style="top:74px"></div>
<div class="ck" style="top:92px"></div>
<div class="ck" style="top:110px"></div>
<div class="ck" style="top:146px"></div>
<div class="ck" style="top:164px"></div>
<div class="ck" style="top:182px"></div>
<div class="ck" style="top:200px"></div>
<div class="ck" style="top:218px"></div>
<div class="ck" style="top:236px"></div>
<div class="ck" style="top:254px"></div>
<div class="ck" style="top:290px"></div>
<div class="ck" style="top:308px"></div>
<div class="ck" style="top:326px"></div>
<div class="ck" style="top:344px"></div>
<div class="ck" style="top:362px"></div>
<svg class="abs" style="left:0;top:0" width="198" height="424" viewBox="0 128 198 424">
<path d="M5 208.8 L8.1 213 L12.8 204.8" fill="none" stroke="#000" stroke-width="1.9"/>
<path d="M5 226.8 L8.1 231 L12.8 222.8" fill="none" stroke="#000" stroke-width="1.9"/>
<path d="M5 244.8 L8.1 249 L12.8 240.8" fill="none" stroke="#000" stroke-width="1.9"/>
<path d="M5 280.8 L8.1 285 L12.8 276.8" fill="none" stroke="#000" stroke-width="1.9"/>
<path d="M5 298.8 L8.1 303 L12.8 294.8" fill="none" stroke="#000" stroke-width="1.9"/>
<path d="M5 316.8 L8.1 321 L12.8 312.8" fill="none" stroke="#000" stroke-width="1.9"/>
<path d="M5 334.8 L8.1 339 L12.8 330.8" fill="none" stroke="#000" stroke-width="1.9"/>
<path d="M5 352.8 L8.1 357 L12.8 348.8" fill="none" stroke="#000" stroke-width="1.9"/>
<path d="M5 370.8 L8.1 375 L12.8 366.8" fill="none" stroke="#000" stroke-width="1.9"/>
<path d="M5 388.8 L8.1 393 L12.8 384.8" fill="none" stroke="#000" stroke-width="1.9"/>
<path d="M5 424.8 L8.1 429 L12.8 420.8" fill="none" stroke="#000" stroke-width="1.9"/>
<path d="M5 442.8 L8.1 447 L12.8 438.8" fill="none" stroke="#000" stroke-width="1.9"/>
<path d="M5 460.8 L8.1 465 L12.8 456.8" fill="none" stroke="#000" stroke-width="1.9"/>
<path d="M5 478.8 L8.1 483 L12.8 474.8" fill="none" stroke="#000" stroke-width="1.9"/>
<path d="M5 496.8 L8.1 501 L12.8 492.8" fill="none" stroke="#000" stroke-width="1.9"/>
<rect x="2.5" y="165.5" width="15" height="15" fill="#d8f3f8" stroke="#3a70d0"/>
<rect x="2.7" y="507.7" width="14.6" height="14.6" fill="#d4d4d4" stroke="#222" stroke-width="1.4"/>
<g fill="none" stroke="#8a8a8a"><path d="M3.5 192.5 V197.5 H9.5"/><path d="M4.5 191.5 V195.5 H6"/><rect x="6.5" y="185.5" width="9" height="10" fill="#fafafa"/></g>
<path d="M9.5 187 V192.5 a1.2 1.2 0 0 0 2.4 0 V184.7 a1.6 1.6 0 0 0 -3.2 0" fill="none" stroke="#4a76a8" stroke-width="1.1"/>
<g fill="none" stroke="#8a8a8a"><path d="M3.5 264.5 V269.5 H9.5"/><path d="M4.5 263.5 V267.5 H6"/><rect x="6.5" y="257.5" width="9" height="10" fill="#fafafa"/></g>
<path d="M9.5 259 V264.5 a1.2 1.2 0 0 0 2.4 0 V256.7 a1.6 1.6 0 0 0 -3.2 0" fill="none" stroke="#4a76a8" stroke-width="1.1"/>
<g fill="none" stroke="#8a8a8a"><path d="M3.5 408.5 V413.5 H9.5"/><path d="M4.5 407.5 V411.5 H6"/><rect x="6.5" y="401.5" width="9" height="10" fill="#fafafa"/></g>
<path d="M9.5 403 V408.5 a1.2 1.2 0 0 0 2.4 0 V400.7 a1.6 1.6 0 0 0 -3.2 0" fill="none" stroke="#4a76a8" stroke-width="1.1"/>
<path d="M33.0 203.5 L34.6 201.9 L36.2 203.5 L34.6 205.1 Z" fill="none" stroke="#9cb090" stroke-width="0.8"/>
<path d="M25.799999999999997 206.5 L27.4 204.9 L29.0 206.5 L27.4 208.1 Z" fill="none" stroke="#9cb090" stroke-width="0.8"/>
<path d="M23.9 213.5 L25.5 211.9 L27.1 213.5 L25.5 215.1 Z" fill="none" stroke="#9cb090" stroke-width="0.8"/>
<path d="M33.0 491.5 L34.6 489.9 L36.2 491.5 L34.6 493.1 Z" fill="none" stroke="#9cb090" stroke-width="0.8"/>
<path d="M25.799999999999997 494.5 L27.4 492.9 L29.0 494.5 L27.4 496.1 Z" fill="none" stroke="#9cb090" stroke-width="0.8"/>
<path d="M23.9 501.5 L25.5 499.9 L27.1 501.5 L25.5 503.1 Z" fill="none" stroke="#9cb090" stroke-width="0.8"/>
<path d="M22.8 222.9 L27.7 232.3 L32.6 221.3 L37 221.3" fill="none" stroke="#98a098" stroke-width="1"/>
<circle cx="22.8" cy="222.9" r="1" fill="#fafafa" stroke="#9cb090" stroke-width="0.7"/>
<circle cx="27.7" cy="232.3" r="1" fill="#fafafa" stroke="#9cb090" stroke-width="0.7"/>
<circle cx="32.6" cy="221.3" r="1" fill="#fafafa" stroke="#9cb090" stroke-width="0.7"/>
<circle cx="37" cy="221.3" r="1" fill="#fafafa" stroke="#9cb090" stroke-width="0.7"/>
<path d="M23 241 C25 238.5 28 239 30 240.5 C32 239 35.5 238.5 37.5 240 C38.5 243 38 246 36.5 247.5 C34 246.5 31 246.5 29 248 C27 249.5 24.5 249.8 23 248.5 C22 246 22 243.5 23 241 Z" fill="#dcdfdc" stroke="#a4aca4" stroke-width="0.9"/>
<path d="M22 281 H38" stroke="#c9baa9" stroke-width="1.7"/>
<path d="M22 299 H36" stroke="#ff1212" stroke-width="3.6"/>
<path d="M22 317 H38" stroke="#e2dbd3" stroke-width="1.7"/>
<path d="M22 335 H35.4 M31.8 331 L35.8 335 L31.8 339" fill="none" stroke="#3a98f8" stroke-width="1.4"/>
<path d="M22 353 H35.4 M31.8 349 L35.8 353 L31.8 357" fill="none" stroke="#ff30e0" stroke-width="1.4"/>
<path d="M22 371 H35.4 M31.8 367 L35.8 371 L31.8 375" fill="none" stroke="#3048a8" stroke-width="1.4"/>
<rect x="22.5" y="381.5" width="15" height="15" fill="#a070f8" stroke="#8c5cf0"/>
<path d="M22 425 H31" stroke="#404040" stroke-width="2"/><path d="M30.2 422.2 L36.2 425 L30.2 427.8 Z" fill="#1424c4"/>
<path d="M22 443 H31" stroke="#404040" stroke-width="2"/><path d="M30.2 440.2 L36.2 443 L30.2 445.8 Z" fill="#1424c4"/>
<path d="M22 461 H31" stroke="#404040" stroke-width="2"/><path d="M30.2 458.2 L36.2 461 L30.2 463.8 Z" fill="#1424c4"/>
<path d="M22 479 H31" stroke="#404040" stroke-width="2"/><path d="M30.2 476.2 L36.2 479 L30.2 481.8 Z" fill="#1424c4"/>
<path d="M2 533 H13" stroke="#607890" stroke-width="1.9"/><path d="M12 530 L16.2 533 L12 536 Z" fill="#3fa070"/>
<path d="M3 547 L5.5 550.5 H13.5 L16 547 M5.5 550.5 V553 M13.5 550.5 V553" fill="none" stroke="#30c8c0" stroke-width="2"/>
</svg>

</div>
<div id="sb"><div id="sbb"></div>
<svg class="abs" style="left:2px;top:4px" width="9" height="5" viewBox="0 0 9 5"><path d="M0.4 4.6 L4.4 0.3 L8.4 4.6 Z" fill="#404040"/></svg></div>

<div class="abs" style="left:215px;top:477px;width:1px;height:1px;background:#8c8c8c"></div><div class="abs" style="left:215px;top:480px;width:1px;height:1px;background:#8c8c8c"></div><div class="abs" style="left:215px;top:483px;width:1px;height:1px;background:#8c8c8c"></div><div class="abs" style="left:215px;top:486px;width:1px;height:1px;background:#8c8c8c"></div><div class="abs" style="left:215px;top:489px;width:1px;height:1px;background:#8c8c8c"></div><div class="abs" style="left:215px;top:492px;width:1px;height:1px;background:#8c8c8c"></div>
<div id="map">
<svg width="899" height="413" viewBox="219 139 899 413" style="position:absolute;left:0;top:0;">
<defs>
<filter id="spk" x="0" y="0" width="100%" height="100%" color-interpolation-filters="sRGB">
<feTurbulence type="fractalNoise" baseFrequency="0.15 0.2" numOctaves="2" seed="11" result="n"/>
<feColorMatrix in="n" type="matrix" values="0 0 0 0 0.76  0 0 0 0 0.83  0 0 0 0 0.89  10 0 0 0 -6.6" result="lt"/>
<feColorMatrix in="n" type="matrix" values="0 0 0 0 0.45  0 0 0 0 0.53  0 0 0 0 0.6  0 -10 0 0 2.95" result="dk"/>
<feMerge><feMergeNode in="lt"/><feMergeNode in="dk"/></feMerge>
</filter>
<filter id="soft" x="-5%" y="-5%" width="110%" height="110%"><feGaussianBlur stdDeviation="0.6"/></filter>
<linearGradient id="chd" x1="0" y1="0" x2="0" y2="1">
<stop offset="0" stop-color="#8398aa"/><stop offset="0.3" stop-color="#5d7084"/><stop offset="0.7" stop-color="#3b4a59"/><stop offset="1" stop-color="#73889a"/>
</linearGradient>
<linearGradient id="lb" x1="0" y1="0" x2="0" y2="1">
<stop offset="0" stop-color="#b9ccda"/><stop offset="0.5" stop-color="#b2c6d5"/><stop offset="0.55" stop-color="#a9bdcc"/><stop offset="1" stop-color="#a6bac9"/>
</linearGradient>
</defs>
<rect x="219" y="139" width="842" height="413" fill="#95a9b8"/>
<rect x="1059" y="139" width="59" height="413" fill="#b2b2b2"/>
<!-- texture -->
<g opacity="0.45"><rect x="219" y="139" width="840" height="232" filter="url(#spk)"/></g>
<g opacity="0.14"><rect x="219" y="455" width="840" height="97" filter="url(#spk)"/></g>
<!-- smooth areas (cover texture) -->
<g fill="#95a9b8">
<rect x="605" y="139" width="102" height="137"/>
<rect x="583" y="139" width="18" height="148" opacity="0.7"/>
<rect x="1019" y="139" width="40" height="240"/>
<rect x="219" y="139" width="170" height="232" opacity="0.55"/>
<rect x="389" y="139" width="60" height="232" opacity="0.25"/>
<rect x="219" y="352" width="300" height="20" opacity="0.7"/>
</g>
<g fill="none" stroke-linejoin="miter" filter="url(#soft)">
<!-- compound: inner dark band -->
<path d="M604 278.3 H709 V250 H726.3 V227 H843" stroke="#8296a7" stroke-width="3.4"/>
<!-- compound: light ridge -->
<path d="M575.4 139 V290.5 H717.3 V254.5 H732 V232 H843" stroke="#b2c5d3" stroke-width="4.4"/>
<!-- compound: SE dark -->
<path d="M581 139 V287" stroke="#8195a6" stroke-width="2.6"/>
<path d="M578 296 H722 V259.3 H736.6 V236.8 H843" stroke="#8498a8" stroke-width="2.4"/>
<!-- inner light vertical + inner dark vertical -->
<path d="M603 139 V276" stroke="#a9bccb" stroke-width="2.6"/>
<path d="M708.6 139 V197" stroke="#8397a7" stroke-width="2.6"/>
<path d="M704.6 139 V152" stroke="#a9bccb" stroke-width="1.5"/>
<!-- short horizontal -->
<path d="M734 210.6 H843" stroke="#afc2d0" stroke-width="2.6"/>
<path d="M736 213.4 H843" stroke="#8a9eae" stroke-width="1.2"/>
<!-- building -->
<path d="M782.5 346 V262 Q782.5 255.5 789 255.5 H842" stroke="#abbecd" stroke-width="7"/>
<path d="M790 260.3 H838 M790.2 262 V345" stroke="#8599aa" stroke-width="2.4"/>
<path d="M843 258 V346" stroke="#8296a7" stroke-width="4"/>
<path d="M780 347 H843" stroke="#8a9eae" stroke-width="1.6"/>
<rect x="790" y="276" width="44" height="76" rx="2" fill="#a0b4c3" stroke="none"/>
<path d="M790 278.5 H834" stroke="#b6c8d5" stroke-width="5"/>
<path d="M790.5 280 V352" stroke="#adc0ce" stroke-width="2"/>
<path d="M833.6 284 V352" stroke="#8397a7" stroke-width="2.6"/>
<path d="M800 352.6 H834" stroke="#8397a7" stroke-width="1.8"/>
<!-- stepped line right of building -->
<path d="M860.8 238.5 V313.8 H853.5 V332 H868.5" stroke="#afc2d0" stroke-width="2.6"/>
<path d="M865.5 250 V330" stroke="#8c9fae" stroke-width="1.6" opacity="0.8"/>
<!-- right vertical wall -->
<path d="M999.5 139 V358" stroke="#8094a5" stroke-width="2.8"/>
<path d="M1012.8 139 V384" stroke="#b2c5d3" stroke-width="7"/>
<path d="M1005 139 V384" stroke="#a0b4c3" stroke-width="4"/>
<path d="M1018.5 139 V380" stroke="#8c9fae" stroke-width="1.2"/>
<!-- top-left faint features -->
<path d="M389.5 139 V169 H366" stroke="#8599a9" stroke-width="2.2"/>
<path d="M393.6 139 V160" stroke="#a9bccb" stroke-width="1.5"/>
<path d="M389.5 257 V348" stroke="#8a9eae" stroke-width="2.2"/>
<path d="M393 205 V240" stroke="#8ea2b1" stroke-width="1.4"/>
<path d="M312 160 V350" stroke="#a4b8c7" stroke-width="1.6" opacity="0.8"/>
<path d="M221.5 150 V330" stroke="#a9bccb" stroke-width="5" opacity="0.75"/>
<path d="M222 169 H262 M222 219 H276 M222 305 H242 M330 283 H372 M352 305 H392" stroke="#abbecc" stroke-width="1.8" opacity="0.85"/>
<!-- faint line above channel -->
<path d="M760 373.5 H986" stroke="#899dad" stroke-width="1.6"/>
<path d="M219 381.5 H560" stroke="#a5b8c7" stroke-width="1.6" opacity="0.7"/>
<path d="M440 376 H700" stroke="#a7bac8" stroke-width="1.4" opacity="0.6"/>
</g>
<!-- channel dark band -->
<path d="M219 391 L560 389.5 L780 386 L1000 383.3 L1059 382.8 L1059 392 L1000 390 L780 393 L560 396 L219 399.5 Z" fill="#5a6d81"/>
<path d="M219 391.6 L560 390 L780 386.6 L1000 383.9 L1059 383.4" stroke="#8196a8" stroke-width="1.6" fill="none"/>
<path d="M219 397 L560 394 L780 391 L1000 388 L1059 388.6" stroke="#364451" stroke-width="2.6" fill="none"/>
<path d="M219 399.6 L560 396.2 L780 393.2 L1000 390.2 L1059 392" stroke="#7b90a2" stroke-width="1.2" fill="none"/>
<path d="M1059 383 H1118 V392 H1059 Z" fill="#5a5a5a"/>
<path d="M1059 386.5 H1118" stroke="#2e2e2e" stroke-width="2"/>
<!-- channel light band -->
<path d="M345 446.5 L515 444.5 L780 442.5 L1052 443.2 V449 L345 450.5 Z" fill="#a1b5c4"/>
<path d="M219 441.8 L330 440.6 L380 435.4 L515 432.2 L780 429.2 L1059 429.2 L1059 441 L780 441.4 L515 443.8 L345 446.5 L330 450.5 L219 450.5 Z" fill="url(#lb)"/>
<path d="M380 435.5 L515 432.5 L780 430.2 L1059 430.2" stroke="#cddbe6" stroke-width="1.6" fill="none" stroke-dasharray="3 3"/>
<rect x="1059" y="430" width="59" height="9" fill="#d2d2d2"/>
<path d="M1061 431 H1118" stroke="#f4f4f4" stroke-width="1.5" stroke-dasharray="3 2"/>
<g fill="none" filter="url(#soft)">
<!-- lower area features -->
<path d="M219 484 H384" stroke="#a9bccb" stroke-width="2.2" opacity="0.85"/>
<path d="M219 492.5 L248 484" stroke="#a9bccb" stroke-width="3.4" opacity="0.85"/>
<path d="M377 497.5 H408 L420 487" stroke="#8498a8" stroke-width="1.8"/>
<path d="M413 483.6 H440" stroke="#a9bccb" stroke-width="1.8"/>
<path d="M440 497.5 H597 L644 482.5" stroke="#8296a6" stroke-width="1.8"/>
<path d="M565 493 L640 481" stroke="#aabdcb" stroke-width="3.4"/>
<path d="M219 528.5 H385" stroke="#a9bccb" stroke-width="2.4" opacity="0.85"/>
<path d="M219 540 L260 537.5 L300 539.5 L350 537 L386 539.5" stroke="#788c9d" stroke-width="2.8"/>
<path d="M428 545 C429 530 434 523.5 445 522.5 H1001" stroke="#acbfcd" stroke-width="2.4"/>
<path d="M452 527 H836" stroke="#7d91a2" stroke-width="2.8"/>
<path d="M856 531 H975" stroke="#7d91a2" stroke-width="2.8"/>
<path d="M470 528 L460 538" stroke="#a9bccb" stroke-width="3"/>
<path d="M708 476.5 H988" stroke="#adbfce" stroke-width="2.2" stroke-dasharray="14 5 6 4"/>
<path d="M888 535 V552 M991 535 V552" stroke="#8296a6" stroke-width="2"/>
<path d="M995 540 L1003 532" stroke="#7f93a4" stroke-width="3"/>
<path d="M219 455 H1050" stroke="#8a9eae" stroke-width="1.1" opacity="0.8"/>
</g>
<!-- yellow bank lines -->
<g fill="none" stroke="#e0ea1a" stroke-width="2" stroke-linejoin="round">
<path d="M219 388.2 L515 386.6 L780 384.2 L967 382 L1005 374.8 H1052"/>
<path d="M219 450.5 H330 L343.5 445.6 L515 444.5 L780 442.5 L1052 443.2"/>
</g>
<path d="M1058 372 L1054.5 375 L1058 378 M1058 440.5 L1054.5 443.5 L1058 446.5" stroke="#e0ea1a" stroke-width="1.6" fill="none"/>
<!-- red cross-section -->
<rect x="1051" y="370" width="3.8" height="77.5" fill="#d61f2c"/>
<!-- blue boundary -->
<path d="M1060.4 139 L1057.4 552" stroke="#1a48b0" stroke-width="2" fill="none"/>
<!-- gray zone details -->
<g fill="none" filter="url(#soft)">
<path d="M1103 192 C1096 200 1094 230 1093 262 C1092.5 285 1092 300 1089 312" stroke="#e2e2e2" stroke-width="1.6" stroke-dasharray="9 3 4 2"/>
<path d="M1097 215 V272" stroke="#dcdcdc" stroke-width="2" stroke-dasharray="5 3"/>
<path d="M1088 142 L1085 165" stroke="#dedede" stroke-width="1.4"/>
<path d="M1112.5 196 V330" stroke="#a2a2a2" stroke-width="8" opacity="0.8"/>
<path d="M1114 139 V162" stroke="#8e8e8e" stroke-width="5"/>
<path d="M1108 205 V240 M1104 300 V330 M1100 322 H1110" stroke="#8e8e8e" stroke-width="1.6"/>
<path d="M1093 405 L1096 400 M1100 520 L1096 528 M1080 548 L1076 552" stroke="#e6e6e6" stroke-width="1.4"/>
<path d="M1062 160 V172 M1063 205 V212" stroke="#9a9a9a" stroke-width="1.4"/>
</g>

</svg>
</div>

<div class="abs" style="left:1292px;top:536px;width:40px;height:16px;background:#000;color:#fff;font-family:'Liberation Mono','DejaVu Sans Mono',monospace;font-weight:bold;font-size:10.5px;line-height:16px;text-align:center;"><span style="display:inline-block;transform:scaleX(1.3);">0:00</span></div>
</body></html>
